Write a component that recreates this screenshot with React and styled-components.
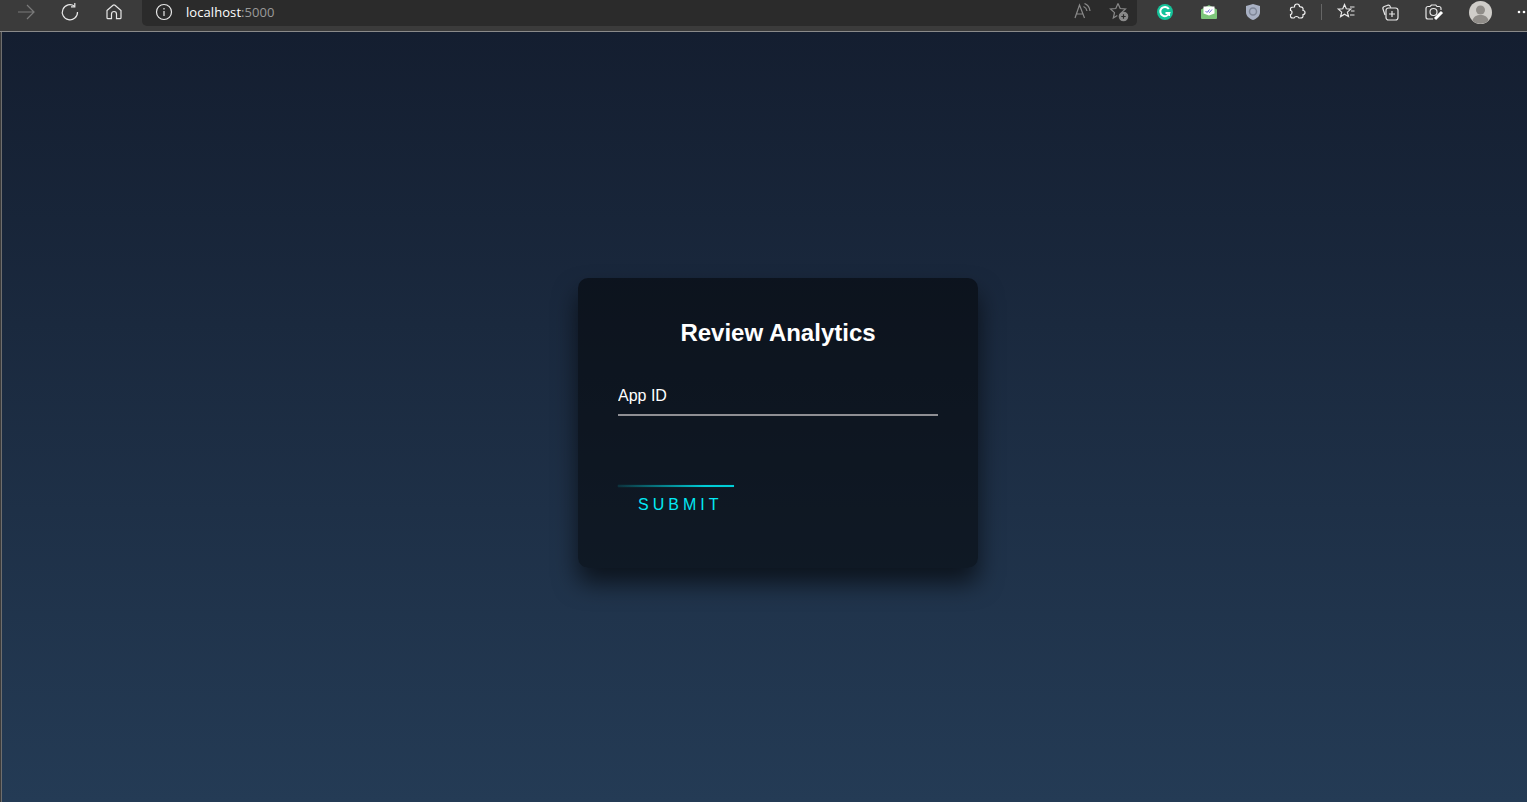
import React from 'react'
import styled, { createGlobalStyle } from 'styled-components'

const GlobalStyle = createGlobalStyle`
  html, body {
    margin: 0;
    padding: 0;
    height: 100%;
    overflow: hidden;
    background: #3b3b3b;
    font-family: "Liberation Sans", Arial, sans-serif;
  }
`;

const Shell = styled.div`
  display: flex;
  flex-direction: column;
  width: 100%;
  height: 802px;
`;

const Toolbar = styled.header`
  flex: none;
  height: 31px;
  display: flex;
  align-items: flex-start;
  background: #3b3b3b;
  border-bottom: 1px solid #8a8a8a;
`;

const NavGroup = styled.div`
  display: flex;
  width: 142px;
  flex: none;
  align-items: flex-start;
  padding-left: 4px;
  box-sizing: border-box;
`;

const IconSlot = styled.span`
  flex: none;
  width: ${(p) => p.$w || 44}px;
  height: 24px;
  display: flex;
  align-items: center;
  justify-content: center;
`;

const AddressBar = styled.div`
  flex: none;
  width: 995px;
  height: 26px;
  display: flex;
  align-items: flex-start;
  background: #2b2b2b;
  border-radius: 0 0 5px 5px;
  font-family: "Open Sans", "Noto Sans", sans-serif;
  font-size: 13px;
  color: #fff;
`;

const Url = styled.span`
  flex: 1;
  line-height: 24px;
  letter-spacing: 0.07px;
  b {
    font-weight: 400;
    color: #9a9a9a;
  }
`;

const ExtensionGroup = styled.div`
  flex: 1;
  display: flex;
  align-items: flex-start;
  padding-left: 6px;
`;

const Divider = styled.span`
  flex: none;
  width: 1px;
  height: 16px;
  margin: 4px 2px 0 2px;
  background: #666;
`;

const Page = styled.main`
  flex: 1;
  display: flex;
  align-items: flex-start;
  justify-content: center;
  margin-left: 1px;
  padding: 246px 0 0 27px;
  box-sizing: border-box;
  background: linear-gradient(#141e30, #243b55);
  border-left: 1px solid #6e6e6e;
`;

const Card = styled.form`
  width: 400px;
  height: 290px;
  padding: 40px;
  box-sizing: border-box;
  background: rgba(0, 0, 0, 0.5);
  border-radius: 10px;
  box-shadow: 0 15px 25px rgba(0, 0, 0, 0.6);
`;

const Title = styled.h2`
  margin: 0 0 31px;
  padding: 1px 0 0;
  color: #fff;
  font-size: 24px;
  line-height: 28px;
  font-weight: 700;
  text-align: center;
`;

const Field = styled.div`
  margin-bottom: 69px;
`;

const Input = styled.input`
  display: block;
  width: 100%;
  box-sizing: border-box;
  padding: 10px 0;
  height: 38px;
  font: 16px "Liberation Sans", Arial, sans-serif;
  color: #fff;
  background: transparent;
  border: 0;
  border-bottom: 2px solid #8f8f94;
  outline: none;
  &::placeholder {
    color: #fff;
    opacity: 1;
  }
`;

const SubmitButton = styled.a`
  position: relative;
  display: block;
  width: 116px;
  box-sizing: border-box;
  padding: 11px 0 10px 20px;
  color: #03e9f4;
  font-size: 16px;
  line-height: 18px;
  letter-spacing: 4px;
  white-space: nowrap;
  text-transform: uppercase;
`;

const ButtonLine = styled.span`
  position: absolute;
  left: 0;
  top: 0;
  width: 100%;
  height: 2px;
  background: linear-gradient(90deg, rgba(3, 233, 244, 0.12), #00cdd7 75%);
  box-shadow: 0 0 1px rgba(0, 205, 215, 0.45);
`;

const Glyph = styled.svg`
  display: block;
  fill: none;
  stroke: ${(p) => p.$color || '#e8e8e8'};
  stroke-width: 1.2;
`;

const App = () => {
  return (
    <Shell>
      <GlobalStyle />
      <Toolbar>
        <NavGroup>
          <IconSlot>
            <Glyph width="20" height="20" viewBox="0 0 20 20" $color="#7b7b7b">
              <path d="M2 10h16M11 3l7 7-7 7" />
            </Glyph>
          </IconSlot>
          <IconSlot>
            <Glyph width="20" height="20" viewBox="0 0 20 20">
              <path d="M14.5 4.200A7.600 7.600 0 1 0 17.500 10" />
              <path d="M14.800 1v3.800H11" />
            </Glyph>
          </IconSlot>
          <IconSlot>
            <Glyph width="20" height="20" viewBox="0 0 20 20">
              <path d="M3 8.500 9 3.200a1.500 1.500 0 0 1 2 0l6 5.300v7.200a1 1 0 0 1-1 1h-3.500V12a2.500 2.500 0 0 0-5 0v4.700H4a1 1 0 0 1-1-1z" />
            </Glyph>
          </IconSlot>
        </NavGroup>
        <AddressBar>
          <IconSlot>
            <Glyph width="18" height="18" viewBox="0 0 18 18">
              <circle cx="9" cy="9" r="7.500" />
              <path d="M9 8v5M9 5v1.400" />
            </Glyph>
          </IconSlot>
          <Url>localhost<b>:5000</b></Url>
          <IconSlot $w={36}>
            <Glyph width="18" height="18" viewBox="0 0 18 18" $color="#8a8a8a">
              <path d="M1 15 5.500 2l5 13M2.500 11h6.300M9.500 3.500a6 6 0 0 1 3.500 4.500M10.500 0.500a9 9 0 0 1 5.500 7.500" />
            </Glyph>
          </IconSlot>
          <IconSlot $w={36}>
            <Glyph width="20" height="20" viewBox="0 0 20 20" $color="#8a8a8a">
              <path d="M9 1.500 11.200 6.500l5.300.5-4 3.600M9 1.500 6.800 6.500l-5.300.5 4 3.600-1.200 5.400 4-2.400" />
              <circle cx="14.500" cy="14.500" r="4.200" fill="#8a8a8a" />
              <path d="M14.500 12.300v4.400M12.300 14.500h4.400" stroke="#2b2b2b" />
            </Glyph>
          </IconSlot>
        </AddressBar>
        <ExtensionGroup>
          <IconSlot>
            <svg width="18" height="18" viewBox="0 0 18 18">
              <circle cx="9" cy="9" r="8" fill="#15c39a" />
              <path d="M12.800 6a4.600 4.600 0 1 0 .5 4H9.500" fill="none" stroke="#fff" strokeWidth="2" />
              <path d="M13.300 10v3" fill="none" stroke="#fff" strokeWidth="1.500" />
            </svg>
          </IconSlot>
          <IconSlot>
            <svg width="18" height="18" viewBox="0 0 18 18">
              <path d="M1 6.500 9 2l8 4.500V15a1 1 0 0 1-1 1H2a1 1 0 0 1-1-1z" fill="#7cc67a" />
              <path d="M3.500 3.500h11v7l-5.500 2-5.500-2z" fill="#fff" />
              <path d="M5.500 8l1.500 1.500 2.500-3M8.500 8.500l1 1 2.500-3" fill="none" stroke="#6f6fd8" strokeWidth="1" />
            </svg>
          </IconSlot>
          <IconSlot>
            <svg width="16" height="18" viewBox="0 0 16 18">
              <path d="M8 1 15 3v6c0 4-3 6.500-7 8-4-1.500-7-4-7-8V3z" fill="#a9b1c4" />
              <circle cx="8" cy="8.500" r="3.500" fill="none" stroke="#7f8798" strokeWidth="1.500" />
            </svg>
          </IconSlot>
          <IconSlot>
            <Glyph width="18" height="18" viewBox="0 0 18 18" $color="#f2f2f2">
              <path d="M6.500 3.500c0-1.300 1-2.500 2.500-2.500s2.500 1.200 2.500 2.500c0 .5 2 .2 3 1s.5 2.500.5 3c1.200 0 2 1 2 2s-.8 2-2 2c0 1 .3 2.300-.5 3s-2.500.5-3.500.5c-.5-1-1.500-1.500-2.500-1.500s-2 .5-2.500 1.500c-1 0-2.300.2-3-.5s-.5-2-.5-3c1 0 1.500-1 1.500-2s-.5-2-1.500-2c0-1-.2-2 .5-2.800s2.500-.7 3.500-.7z" />
            </Glyph>
          </IconSlot>
          <Divider />
          <IconSlot>
            <Glyph width="20" height="20" viewBox="0 0 20 20">
              <path d="M8.500 2.500 10.300 6.800l4.500.3-3.400 3 1.100 4.500-4-2.400-3.900 2.400 1.100-4.500-3.400-3 4.500-.3z" />
              <path d="M14 5h4.500M15 9h3.500M14 13h4.500" />
            </Glyph>
          </IconSlot>
          <IconSlot>
            <Glyph width="20" height="20" viewBox="0 0 20 20">
              <path d="M5 13 3 7a2 2 0 0 1 1.300-2.500l3.500-1.300a2 2 0 0 1 2.400 1.200l.6 1.400" />
              <rect x="6" y="6" width="12" height="12" rx="2.500" />
              <path d="M12 9v6M9 12h6" />
            </Glyph>
          </IconSlot>
          <IconSlot>
            <Glyph width="20" height="20" viewBox="0 0 20 20">
              <path d="M17 8V6.500a2 2 0 0 0-2-2h-2L11.800 3H7.500L6 4.500H4a2 2 0 0 0-2 2V15a2 2 0 0 0 2 2h5" />
              <circle cx="9.500" cy="10" r="3.500" />
              <path d="m11 17 7-7" stroke="#fff" strokeWidth="3" />
            </Glyph>
          </IconSlot>
          <IconSlot $w={48}>
            <svg width="23" height="23" viewBox="0 0 23 23">
              <circle cx="11.500" cy="11.500" r="11.500" fill="#cfcdc9" />
              <circle cx="11.500" cy="9" r="4.500" fill="#8f8c88" />
              <path d="M3.500 19.500c1-4 4-5.500 8-5.500s7 1.500 8 5.500a11.500 11.500 0 0 1-16 0z" fill="#8f8c88" />
            </svg>
          </IconSlot>
          <IconSlot $w={40}>
            <svg width="14" height="4" viewBox="0 0 14 4">
              <circle cx="2" cy="2" r="1.300" fill="#fff" />
              <circle cx="7" cy="2" r="1.300" fill="#fff" />
              <circle cx="12" cy="2" r="1.300" fill="#fff" />
            </svg>
          </IconSlot>
        </ExtensionGroup>
      </Toolbar>
      <Page>
        <Card>
          <Title>Review Analytics</Title>
          <Field>
            <Input placeholder="App ID" />
          </Field>
          <SubmitButton>
            <ButtonLine />
            Submit
          </SubmitButton>
        </Card>
      </Page>
    </Shell>
  );
};

export default App
